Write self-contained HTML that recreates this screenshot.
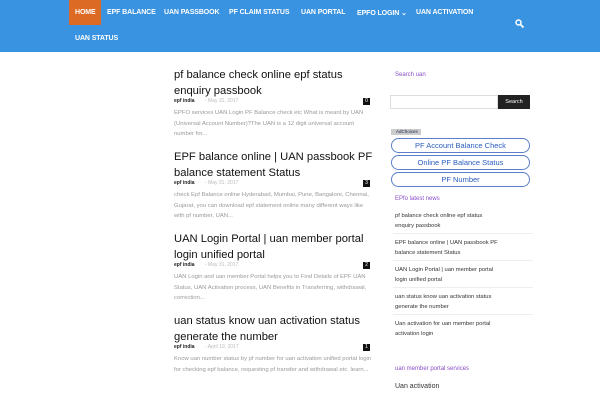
<!DOCTYPE html><html><head><style>
*{margin:0;padding:0;box-sizing:border-box}
body{width:600px;height:400px;overflow:hidden;background:#fff;font-family:"Liberation Sans",sans-serif;position:relative}
.nav{position:absolute;left:0;top:0;width:600px;height:52px;background:#3a93e1}
.nav span{position:absolute;color:#fff;font-size:7px;font-weight:bold;top:9px;letter-spacing:-0.1px}
.home{position:absolute;left:69px;top:0;width:32px;height:25px;background:#dd6a24}
.a{position:absolute;white-space:nowrap}
.t{font-size:11.2px;color:#111;line-height:15.5px;left:174px;letter-spacing:0px}
.m{font-size:5px;color:#222;font-weight:bold;left:174px}
.d{font-size:5px;color:#bbb;left:205px}
.c{position:absolute;left:363px;width:7px;height:7px;background:#111;color:#fff;font-size:5px;text-align:center;line-height:7px}
.e{font-size:5.9px;color:#999;line-height:10.5px;left:174px;white-space:normal;width:200px}
.s{font-size:5.8px;color:#333;line-height:10px;left:395px;width:130px;white-space:normal}
.hr{position:absolute;left:393px;width:140px;height:1px;background:#eee}
.btn{position:absolute;left:391px;width:139px;height:15px;border:1px solid #5a7ec8;border-radius:8px;color:#2a5cc0;font-size:7.5px;text-align:center;line-height:13px}
</style></head><body>
<div class="nav">
<div class="home"></div>
<span style="left:75px">HOME</span>
<span style="left:107px">EPF BALANCE</span>
<span style="left:164px">UAN PASSBOOK</span>
<span style="left:229px">PF CLAIM STATUS</span>
<span style="left:301px">UAN PORTAL</span>
<span style="left:357px">EPFO LOGIN ⌄</span>
<span style="left:416px">UAN ACTIVATION</span>
<span style="left:75px;top:35px">UAN STATUS</span>
<svg style="position:absolute;left:515px;top:19px" width="9" height="9" viewBox="0 0 9 9"><circle cx="3.5" cy="3.5" r="2.5" stroke="#fff" stroke-width="1.5" fill="none"/><path d="M5.5 5.5L8.5 8.5" stroke="#fff" stroke-width="1.8"/></svg>
</div>

<div class="a t" style="top:68px">pf balance check online epf status<br>enquiry passbook</div>
<div class="a m" style="top:98px">epf india</div><div class="a d" style="top:98px">- May 31, 2017</div><div class="c" style="top:98px">0</div>
<div class="a e" style="top:108px">EPFO services UAN Login PF Balance check etc What is meant by UAN (Universal Account Number)?The UAN is a 12 digit universal account number for...</div>

<div class="a t" style="top:150px">EPF balance online | UAN passbook PF<br>balance statement Status</div>
<div class="a m" style="top:180px">epf india</div><div class="a d" style="top:180px">- May 31, 2017</div><div class="c" style="top:180px">3</div>
<div class="a e" style="top:190px">check Epf Balance online Hyderabad, Mumbai, Pune, Bangalore, Chennai, Gujarat, you can download epf statement online many different ways like with pf number, UAN...</div>

<div class="a t" style="top:232px">UAN Login Portal | uan member portal<br>login unified portal</div>
<div class="a m" style="top:262px">epf india</div><div class="a d" style="top:262px">- May 31, 2017</div><div class="c" style="top:262px">2</div>
<div class="a e" style="top:272px">UAN Login and uan member Portal helps you to Find Details of EPF UAN Status, UAN Activation process, UAN Benefits in Transferring, withdrawal, correction...</div>

<div class="a t" style="top:314px">uan status know uan activation status<br>generate the number</div>
<div class="a m" style="top:344px">epf india</div><div class="a d" style="top:344px">- April 19, 2017</div><div class="c" style="top:344px">1</div>
<div class="a e" style="top:354px">Know uan number status by pf number for uan activation unified portal login for checking epf balance, requesting pf transfer and withdrawal etc. learn...</div>

<div class="a" style="left:395px;top:72px;font-size:6px;color:#8a4fc8">Search uan</div>
<div class="a" style="left:390px;top:95px;width:108px;height:14px;border:1px solid #ddd"></div>
<div class="a" style="left:498px;top:95px;width:32px;height:14px;background:#222;color:#fff;font-size:5.5px;text-align:center;line-height:14px">Search</div>
<div class="a" style="left:391px;top:129px;width:30px;height:6px;background:#ccc;font-size:4.5px;color:#124;line-height:6px;padding-left:5px">AdChoices</div>
<div class="btn" style="top:138px">PF Account Balance Check</div>
<div class="btn" style="top:155px">Online PF Balance Status</div>
<div class="btn" style="top:172px">PF Number</div>
<div class="a" style="left:395px;top:196px;font-size:6px;color:#8a4fc8">EPfo latest news</div>
<div class="a s" style="top:211px">pf balance check online epf status<br>enquiry passbook</div>
<div class="hr" style="top:233px"></div>
<div class="a s" style="top:238px">EPF balance online | UAN passbook PF<br>balance statement Status</div>
<div class="hr" style="top:260px"></div>
<div class="a s" style="top:265px">UAN Login Portal | uan member portal<br>login unified portal</div>
<div class="hr" style="top:287px"></div>
<div class="a s" style="top:292px">uan status know uan activation status<br>generate the number</div>
<div class="hr" style="top:314px"></div>
<div class="a s" style="top:319px">Uan activation for uan member portal<br>activation login</div>
<div class="a" style="left:395px;top:366px;font-size:6px;color:#8a4fc8">uan member portal services</div>
<div class="a" style="left:395px;top:383px;font-size:7px;color:#333">Uan activation</div>
</body></html>
